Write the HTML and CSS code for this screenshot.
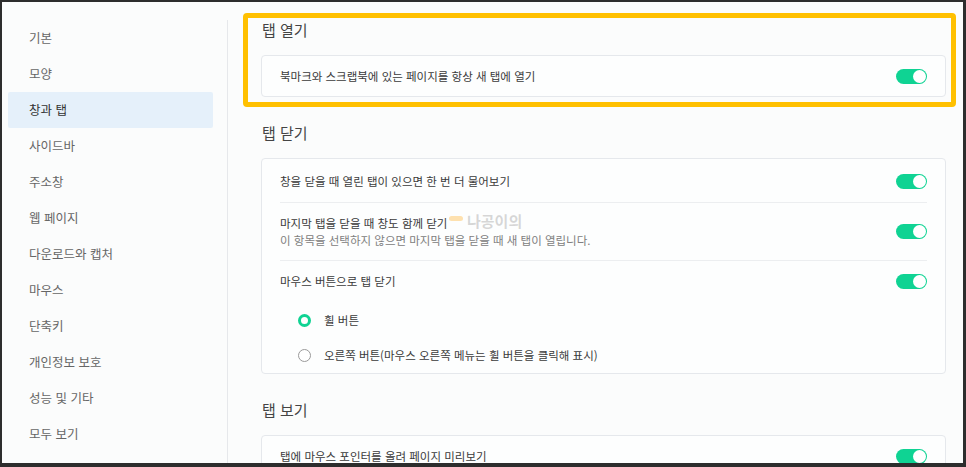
FILE: index.html
```html
<!DOCTYPE html>
<html lang="ko">
<head>
<meta charset="utf-8">
<title>설정 - 창과 탭</title>
<link rel="stylesheet" href="styles.css">
</head>
<body>
<div class="frame">
  <nav class="sidebar">
    <div class="nav-item">기본</div>
    <div class="nav-item">모양</div>
    <div class="nav-item active">창과 탭</div>
    <div class="nav-item">사이드바</div>
    <div class="nav-item">주소창</div>
    <div class="nav-item">웹 페이지</div>
    <div class="nav-item">다운로드와 캡처</div>
    <div class="nav-item">마우스</div>
    <div class="nav-item">단축키</div>
    <div class="nav-item">개인정보 보호</div>
    <div class="nav-item">성능 및 기타</div>
    <div class="nav-item">모두 보기</div>
  </nav>
  <div class="divider"></div>
  <main class="main">
    <section class="section">
      <h2 class="heading">탭 열기</h2>
      <div class="card">
        <div class="row">
          <span class="label">북마크와 스크랩북에 있는 페이지를 항상 새 탭에 열기</span>
          <span class="toggle"><span class="knob"></span></span>
        </div>
      </div>
    </section>

    <section class="section">
      <h2 class="heading">탭 닫기</h2>
      <div class="card">
        <div class="row row-a line">
          <span class="label">창을 닫을 때 열린 탭이 있으면 한 번 더 물어보기</span>
          <span class="toggle"><span class="knob"></span></span>
        </div>
        <div class="row row-b line">
          <div class="text-stack">
            <span class="label">마지막 탭을 닫을 때 창도 함께 닫기</span>
            <span class="desc">이 항목을 선택하지 않으면 마지막 탭을 닫을 때 새 탭이 열립니다.</span>
          </div>
          <span class="toggle"><span class="knob"></span></span>
        </div>
        <div class="group">
          <div class="row row-c">
            <span class="label">마우스 버튼으로 탭 닫기</span>
            <span class="toggle"><span class="knob"></span></span>
          </div>
          <div class="radios">
            <div class="radio-item"><span class="radio checked"></span><span class="label">휠 버튼</span></div>
            <div class="radio-item"><span class="radio"></span><span class="label">오른쪽 버튼(마우스 오른쪽 메뉴는 휠 버튼을 클릭해 표시)</span></div>
          </div>
        </div>
      </div>
    </section>

    <section class="section">
      <h2 class="heading">탭 보기</h2>
      <div class="card">
        <div class="row">
          <span class="label">탭에 마우스 포인터를 올려 페이지 미리보기</span>
          <span class="toggle"><span class="knob"></span></span>
        </div>
      </div>
    </section>

    <div class="highlight"></div>
    <div class="watermark"><span class="wm-blob"></span><span>나공이의</span></div>
  </main>
</div>
</body>
</html>
```

FILE: styles.css
```css
* { box-sizing: border-box; }

html, body {
  margin: 0;
  padding: 0;
  width: 966px;
  height: 467px;
  overflow: hidden;
  background: #2d2d2d;
}

.frame {
  width: 966px;
  height: 467px;
  border-style: solid;
  border-color: #2d2d2d;
  border-width: 2px 3px 4px 2px;
  background: #fbfcfc;
  display: flex;
  overflow: hidden;
  font-family: "Noto Sans CJK KR", "Noto Sans", sans-serif;
}

.sidebar {
  width: 225px;
  flex: none;
  padding: 18px 0 0 6px;
}

.nav-item {
  width: 205px;
  height: 36px;
  line-height: 35px;
  padding-left: 21px;
  font-size: 12.5px;
  color: #666;
  border-radius: 2px;
}

.nav-item.active {
  background: #e5f0fa;
  color: #333;
}

.divider {
  width: 1px;
  flex: none;
  margin-top: 18px;
  background: #e6e8eb;
}

.main {
  flex: 1;
  position: relative;
  padding: 18px 17px 0 33px;
}

.section {
  margin-bottom: 26px;
}

.heading {
  margin: 0 0 15px 1px;
  font-size: 15px;
  line-height: 20px;
  font-weight: normal;
  color: #444;
}

.card {
  border: 1px solid #e5e8ec;
  border-radius: 4px;
  background: #fdfefe;
}

.row {
  margin: 0 18px;
  height: 40px;
  display: flex;
  align-items: center;
  justify-content: space-between;
}

.line {
  border-bottom: 1px solid #eceef0;
}

.row-a { height: 44px; padding-top: 1px; }
.row-b { height: 58px; }
.row-c { height: 20px; margin-top: 10px; }

.label {
  font-size: 11.5px;
  line-height: 17px;
  color: #3a3a3a;
}

.text-stack {
  display: flex;
  flex-direction: column;
}

.desc {
  font-size: 11.5px;
  line-height: 17px;
  color: #808080;
}

.toggle {
  flex: none;
  width: 31px;
  height: 15px;
  border-radius: 8px;
  background: #0fd393;
  padding: 1px;
  display: flex;
  justify-content: flex-end;
}

.knob {
  width: 13px;
  height: 13px;
  border-radius: 50%;
  background: #fff;
}

.radios {
  margin-top: 12px;
}

.radio-item {
  height: 35px;
  display: flex;
  align-items: center;
  gap: 13px;
  padding-left: 36px;
}

.radio {
  flex: none;
  width: 13px;
  height: 13px;
  border-radius: 50%;
  border: 1px solid #9a9a9a;
  background: #fff;
}

.radio.checked {
  border: 3.5px solid #0fd393;
}

.highlight {
  position: absolute;
  left: 15px;
  top: 11px;
  width: 713px;
  height: 94px;
  border: 5px solid #ffc000;
  border-radius: 4px;
  pointer-events: none;
}

.watermark {
  position: absolute;
  left: 221px;
  top: 210px;
  display: flex;
  align-items: center;
  gap: 4px;
  font-size: 15px;
  line-height: 18px;
  font-weight: bold;
  color: rgba(140, 140, 140, 0.35);
  pointer-events: none;
}

.wm-blob {
  width: 14px;
  height: 5px;
  border-radius: 3px;
  background: rgba(255, 190, 80, 0.45);
  margin-top: -6px;
}
```
